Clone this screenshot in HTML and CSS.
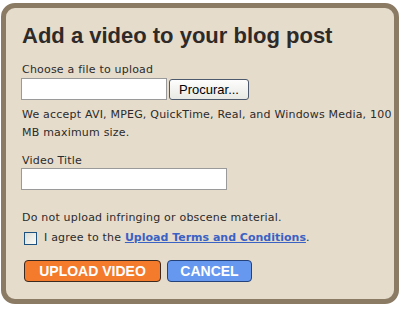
FILE: index.html
```html
<!DOCTYPE html>
<html lang="en">
<head>
    <meta charset="UTF-8">
    <title>Add a video</title>
    <link rel="stylesheet" href="styles.css">
</head>
<body>
<div class="dialog">
    <h1 class="title">Add a video to your blog post</h1>

    <div class="field">
        <label class="label">Choose a file to upload</label>
        <div class="file-row">
            <span class="file-box"></span>
            <button class="browse" type="button">Procurar...</button>
        </div>
    </div>
    <p class="note">We accept AVI, MPEG, QuickTime, Real, and Windows Media, 100 MB maximum size.</p>

    <div class="field field-title">
        <label class="label">Video Title</label>
        <input class="text-box" type="text">
    </div>

    <p class="warn">Do not upload infringing or obscene material.</p>
    <div class="agree">
        <span class="check"></span>
        <span>I agree to the <a class="terms" href="#">Upload Terms and Conditions</a>.</span>
    </div>

    <div class="actions">
        <button class="btn btn-upload" type="button">UPLOAD VIDEO</button>
        <button class="btn btn-cancel" type="button">CANCEL</button>
    </div>
</div>
</body>
</html>
```

FILE: styles.css
```css
body {
    margin: 0;
    background-color: #fff;
    font-family: "DejaVu Sans", Verdana, sans-serif;
    font-size: 11px;
    letter-spacing: 0.2px;
    color: #2b2b2b;
}

.dialog {
    margin: 3px 2px 0 1px;
    box-sizing: border-box;
    height: 301px;
    padding: 12px 0 0 15px;
    background-color: #e6dccc;
    border: 5px solid #8b7b65;
    border-radius: 14px;
}

.title {
    margin: 0 0 0 1px;
    font-family: "Liberation Sans", Arial, sans-serif;
    font-size: 22px;
    font-weight: bold;
    letter-spacing: 0;
    color: #2e2a28;
    line-height: 32px;
}

.field {
    margin-top: 11px;
}

.label {
    display: block;
    margin-left: 1px;
    line-height: 14px;
}

.file-row {
    display: flex;
    align-items: center;
    gap: 2px;
    margin-top: 1px;
}

.file-box {
    display: block;
    width: 144px;
    height: 20px;
    background-color: #fff;
    border: 1px solid #9a9a9a;
}

.browse {
    width: 80px;
    height: 21px;
    padding: 0;
    font-family: "Liberation Sans", Arial, sans-serif;
    font-size: 13px;
    color: #000;
    background: linear-gradient(#fdfdfd, #e8e8e4);
    border: 1px solid #4d5a6e;
    border-radius: 3px;
}

.note {
    margin: 6px 0 0 1px;
    line-height: 18px;
}

.field-title {
    margin-top: 12px;
}

.text-box {
    display: block;
    box-sizing: border-box;
    width: 206px;
    height: 22px;
    margin: 0;
    border: 1px solid #9a9a9a;
    background-color: #fff;
}

.warn {
    margin: 21px 0 0 1px;
    line-height: 14px;
}

.agree {
    display: flex;
    align-items: center;
    gap: 7px;
    margin: 5px 0 0 3px;
    line-height: 16px;
}

.check {
    display: block;
    width: 11px;
    height: 11px;
    border: 1px solid #1c5180;
    background: linear-gradient(135deg, #dcdcd6, #fbfbf9);
}

.terms {
    font-weight: bold;
    letter-spacing: 0;
    color: #3a62c4;
}

.actions {
    display: flex;
    gap: 6px;
    margin: 14px 0 0 3px;
}

.btn {
    height: 22px;
    padding: 0;
    font-family: "Liberation Sans", Arial, sans-serif;
    font-size: 14px;
    font-weight: bold;
    letter-spacing: 0;
    color: #fff;
    border: 1px solid #3a2a20;
    border-radius: 4px;
}

.btn-upload {
    width: 137px;
    background-color: #f47a2c;
}

.btn-cancel {
    width: 85px;
    background-color: #6698f0;
    border-color: #25427a;
}
```
